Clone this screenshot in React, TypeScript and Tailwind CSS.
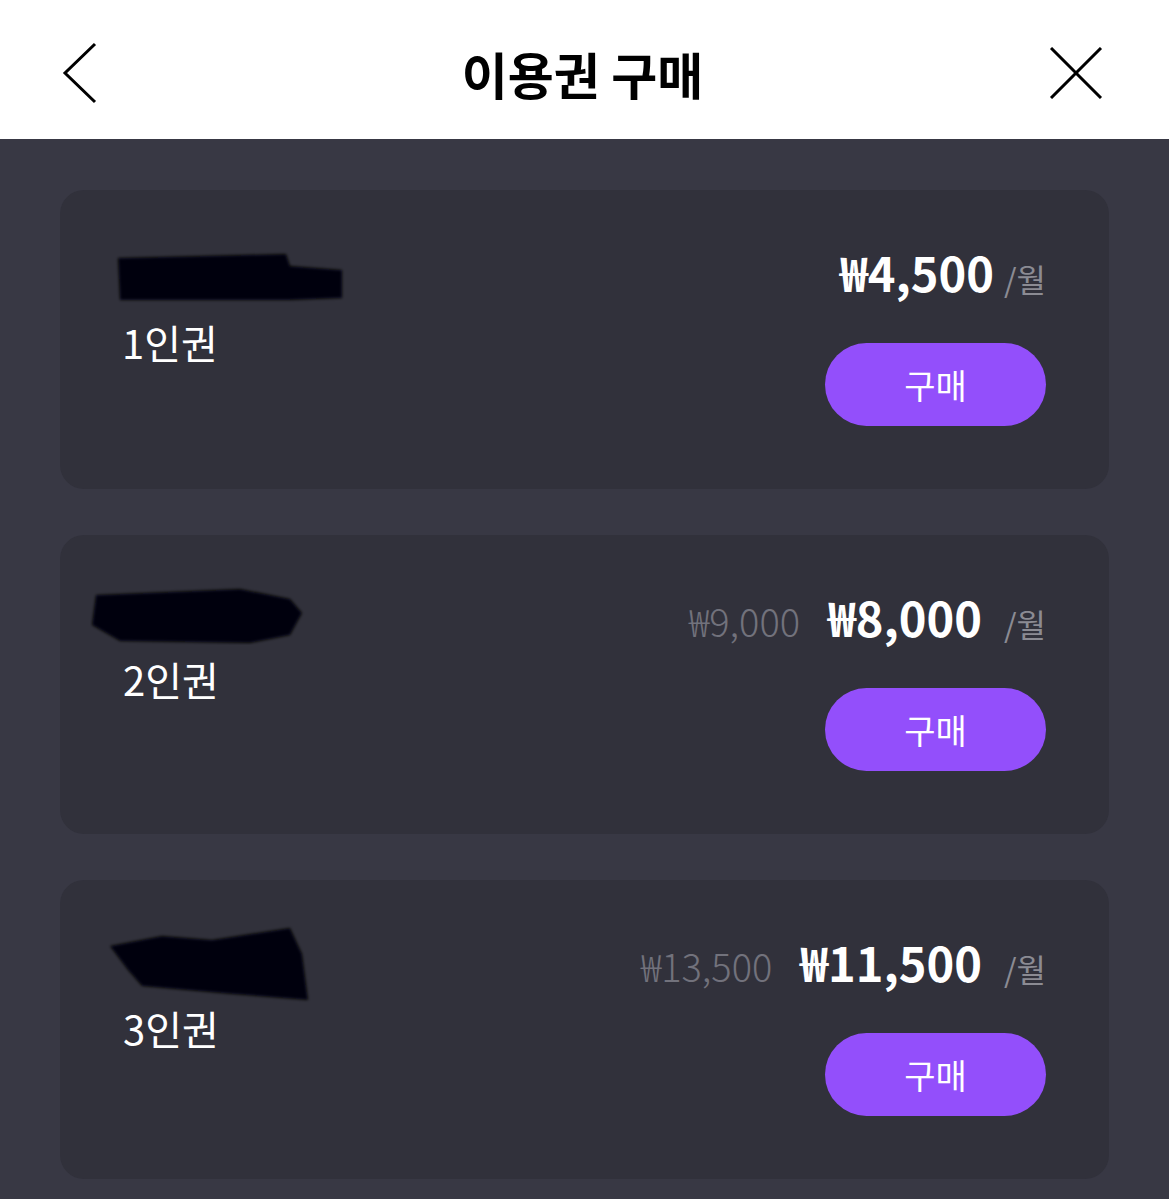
type Plan = {
  label: string;
  price: string;
  original?: string;
  blob: string;
};

const plans: Plan[] = [
  { label: "1인권", price: "₩4,500", blob: "M4 10 L172 6 L176 18 L228 22 L228 50 L176 52 L6 52 Z" },
  { label: "2인권", original: "₩9,000", price: "₩8,000", blob: "M6 10 L150 4 L200 14 L212 28 L200 50 L160 58 L30 56 L2 40 Z" },
  { label: "3인권", original: "₩13,500", price: "₩11,500", blob: "M8 22 L60 12 L110 16 L188 4 L200 30 L206 76 L130 70 L40 62 L26 46 Z" },
];

const font = { fontFamily: '"Noto Sans CJK KR", "Noto Sans", sans-serif' };

function Blob({ d, h }: { d: string; h: number }) {
  return (
    <svg width="240" height={h} viewBox={`0 0 240 ${h}`}>
      <defs>
        <filter id="soft">
          <feGaussianBlur stdDeviation="1.8" />
        </filter>
      </defs>
      <path d={d} fill="#050507" filter="url(#soft)" />
    </svg>
  );
}

function PlanCard({ plan, i }: { plan: Plan; i: number }) {
  return (
    <div className="flex h-[299px] justify-between rounded-[24px] bg-[#31313b] pr-[63px]">
      <div className={i === 0 ? "pl-[54px] pt-[58px]" : i === 1 ? "pl-[30px] pt-[50px]" : "pl-[42px] pt-[44px]"}>
        <Blob d={plan.blob} h={i === 2 ? 80 : 60} />
        <p className={`text-[40px] leading-none text-white ${i === 0 ? "ml-[8px] mt-[14px]" : i === 1 ? "ml-[33px] mt-[14px]" : "ml-[21px] mt-[4px]"}`}>
          {plan.label}
        </p>
      </div>
      <div className="flex flex-col items-end pt-[58px]">
        <div className="flex items-baseline">
          {plan.original && (
            <span className="mr-[28px] text-[38px] font-light leading-none text-[#72727c]">{plan.original}</span>
          )}
          <span className="text-[47px] font-bold leading-none text-white">{plan.price}</span>
          <span className={`text-[32px] leading-none text-[#8b8b93] ${plan.original ? "ml-[22px]" : "ml-[10px]"}`}>/월</span>
        </div>
        <button className="mt-[48px] flex h-[83px] w-[221px] items-center justify-center rounded-full bg-[#934ffb] text-[34px] text-white">
          구매
        </button>
      </div>
    </div>
  );
}

export default function App() {
  return (
    <div className="min-h-[1199px] bg-[#383844]" style={font}>
      <header className="grid h-[139px] grid-cols-[1fr_auto_1fr] items-center bg-white pl-[62px] pr-[66px] pt-[6px]">
        <svg width="36" height="62" viewBox="0 0 36 62" fill="none" stroke="black" strokeWidth="3">
          <polyline points="33,2 3,31 33,60" />
        </svg>
        <h1 className="text-[50px] font-bold leading-none text-black">이용권 구매</h1>
        <svg className="justify-self-end" width="54" height="52" viewBox="0 0 54 52" fill="none" stroke="black" strokeWidth="3">
          <line x1="2" y1="1" x2="52" y2="51" />
          <line x1="52" y1="1" x2="2" y2="51" />
        </svg>
      </header>
      <div className="flex flex-col gap-[46px] px-[60px] pt-[51px] pb-[40px]">
        {plans.map((p, i) => (
          <PlanCard key={p.label} plan={p} i={i} />
        ))}
      </div>
    </div>
  );
}
